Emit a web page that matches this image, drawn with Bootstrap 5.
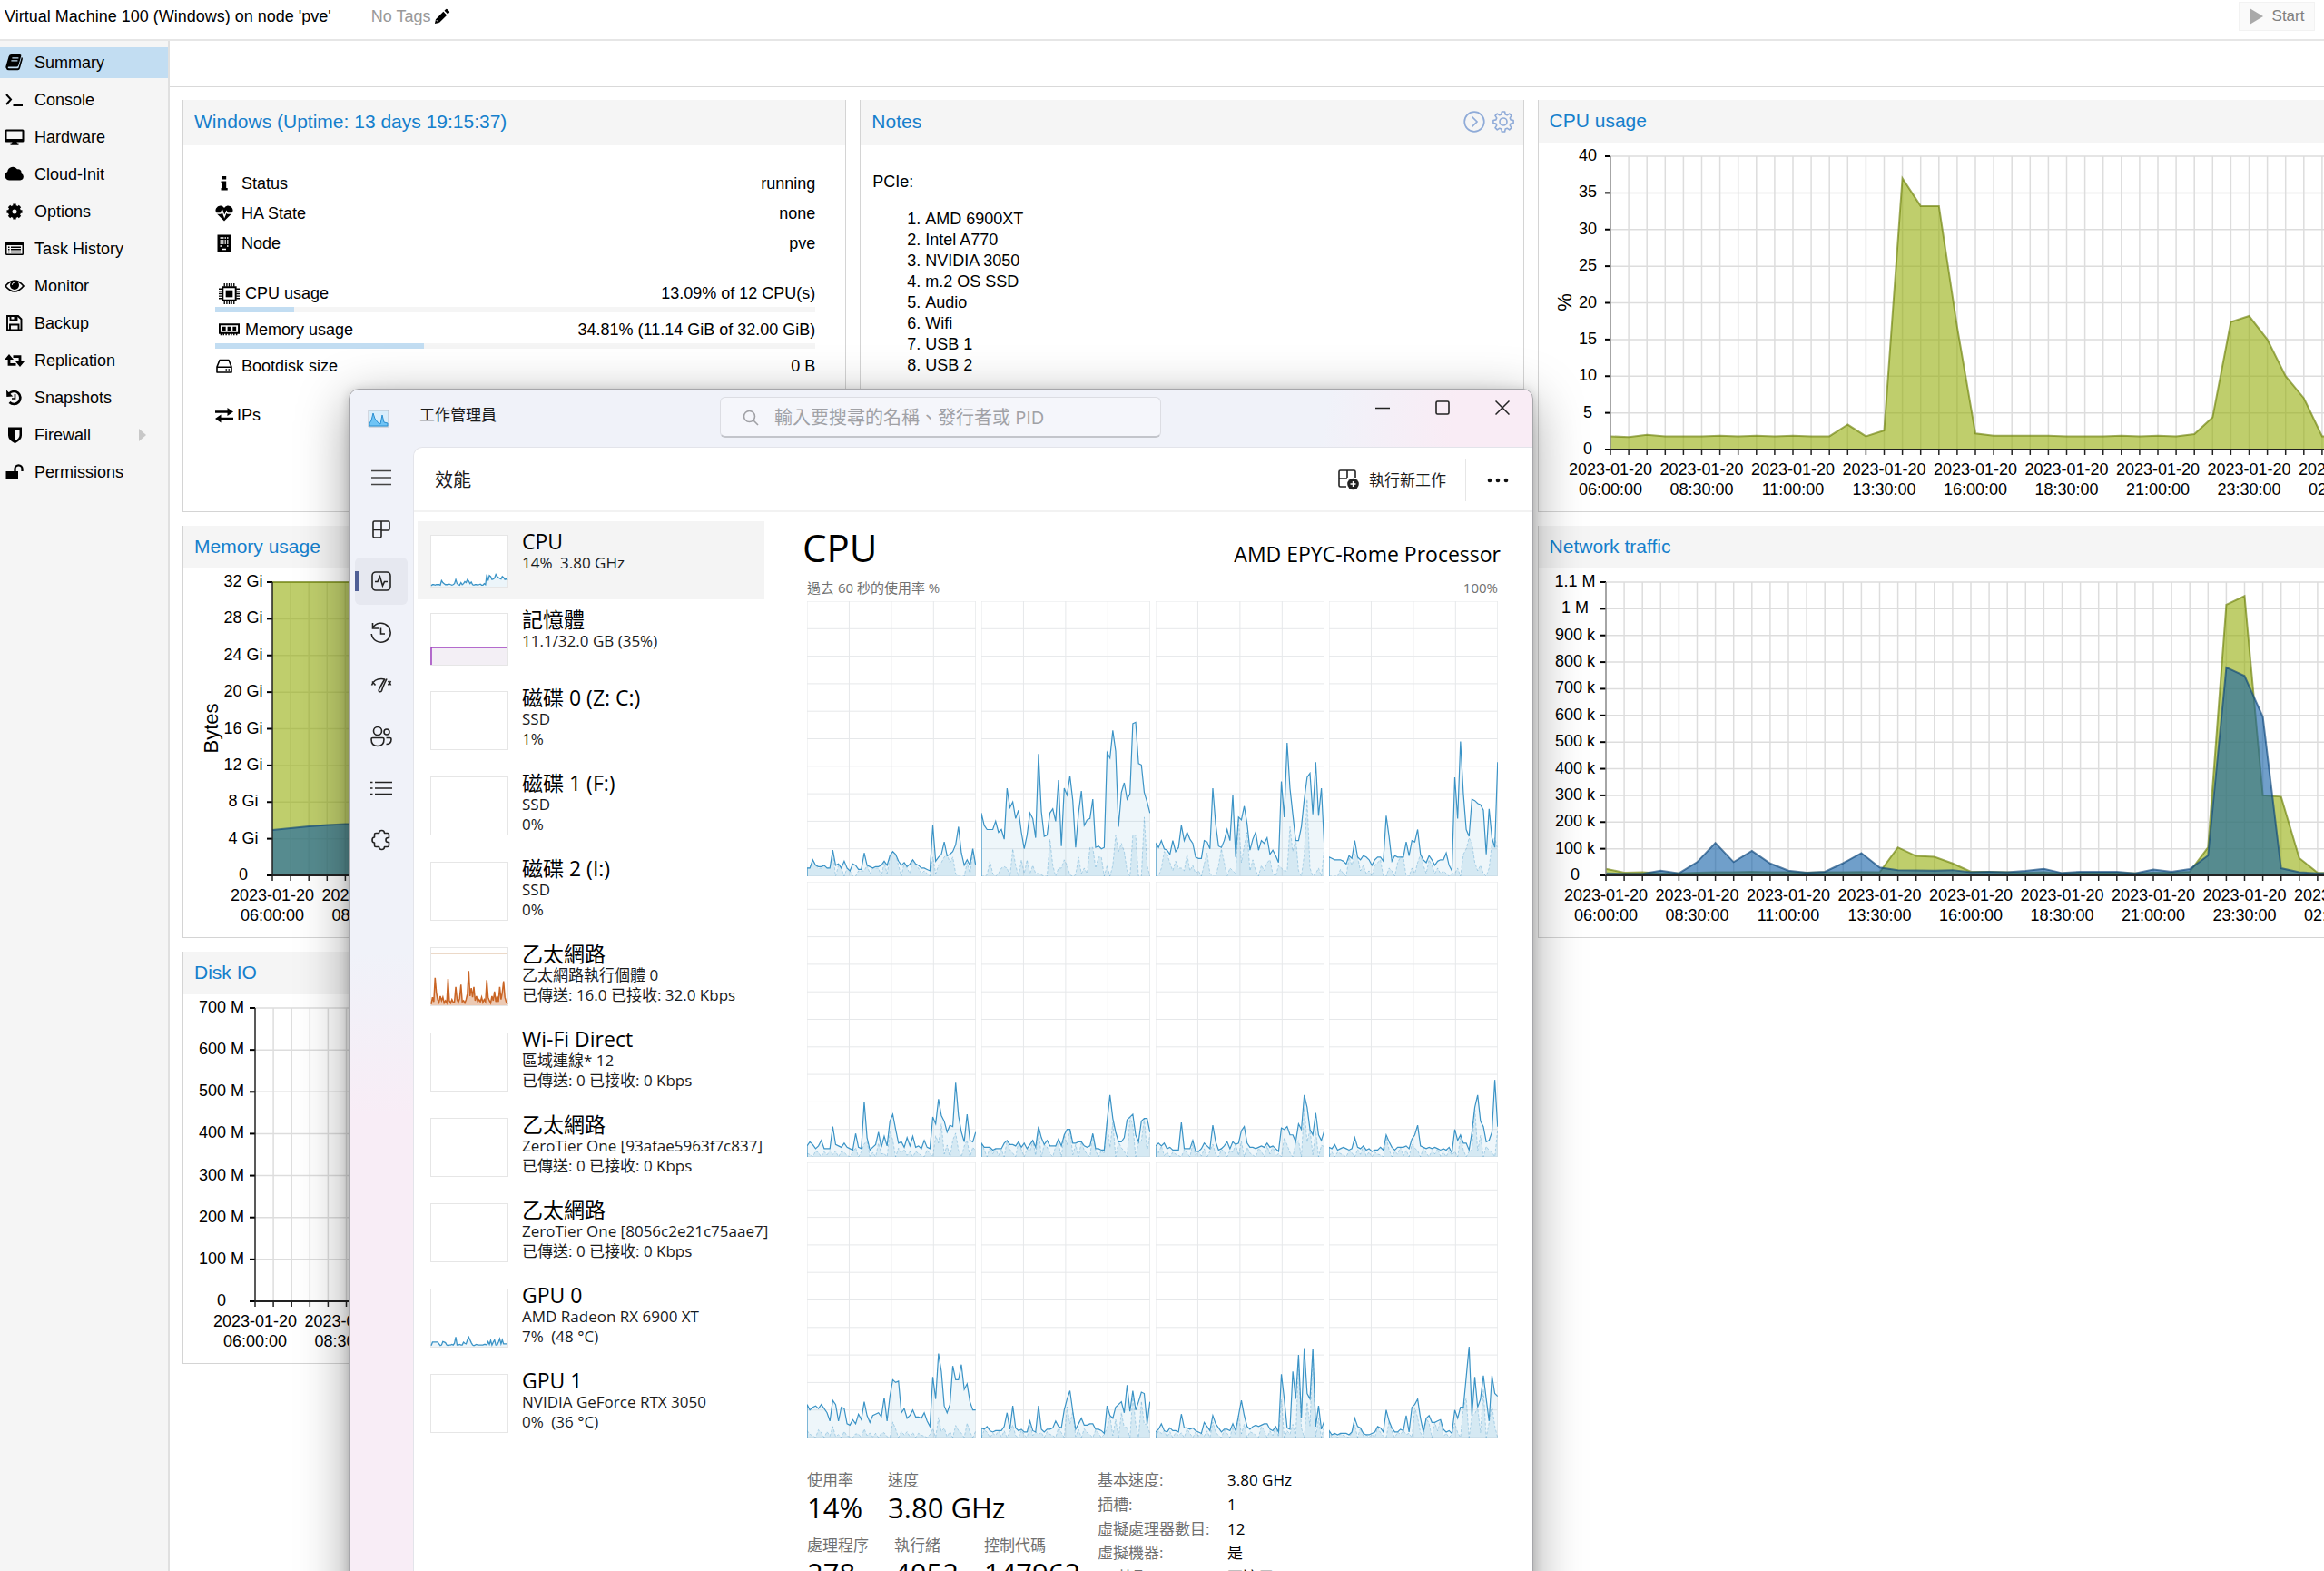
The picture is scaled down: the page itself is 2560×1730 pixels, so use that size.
<!DOCTYPE html>
<html lang="zh-Hant">
<head>
<meta charset="utf-8">
<meta name="viewport" content="width=device-width, initial-scale=1">
<title>Virtual Machine 100 (Windows)</title>
<link href="https://cdn.jsdelivr.net/npm/bootstrap@5.3.0/dist/css/bootstrap.min.css" rel="stylesheet">
<style>
  body { font-family: "Liberation Sans", Arial, sans-serif; font-size: 18px; line-height: 22px; color: #000; background: #fff; }
  svg { display: block; flex: none; }
  .pv-top { height: 45px; border-bottom: 2px solid #e6e6e6; padding: 0 10px 7px 5px; }
  .pv-tags { color: #999; margin-left: 44px; }
  .pv-start { width: 84px; height: 32px; background: #fafafa; border: 1px solid #f2f2f2; color: #808080; font-size: 17px; gap: 10px; }
  .pv-side { width: 187px; background: #f5f5f5; border-right: 2px solid #e0e0e0; padding-top: 7px; gap: 7px; }
  .pv-side a { height: 34px; padding-left: 5px; gap: 11px; color: #000; text-decoration: none; }
  .pv-side a.active { background: #c2ddf2; }
  .pv-side a .pv-caret { margin-left: auto; margin-right: 24px; }
  .pv-bar { height: 51px; border-bottom: 1px solid #d9d9d9; }
  .pv-grid { display: grid; grid-template-columns: repeat(4, 31%); grid-auto-rows: 454px; gap: 15px; padding: 14px 0 0 14px; }
  .pv-wide { grid-column: span 2; }
  .pv-panel { border: 1px solid #d4d4d4; border-top: 0; background: #fff; overflow: hidden; }
  .pv-head { height: 47px; background: #f5f5f5; color: #157fcc; font-size: 21px; line-height: 24px; padding: 0 10px 1px 12px; margin: 0; font-weight: 400; }
  .pv-head h2 { font-size: 21px; line-height: 24px; font-weight: 400; margin: 0; }
  .pv-head.pv-tall { height: 50px; padding-bottom: 3px; }
  .pv-status { padding: 25px 33px 0 35px; }
  .pv-line { height: 33px; gap: 9px; }
  .pv-line.pv-meter { gap: 6px; }
  .pv-line.pv-mid { height: 34px; padding-top: 3px; }
  .pv-line.pv-low { height: 30px; margin-top: 24px; }
  .pv-line span:last-child { margin-left: auto; }
  .pv-use { height: 6px; border-radius: 0; background: #f5f5f5; }
  .pv-use .progress-bar { background: #c2ddf2; }
  .pv-notes { padding: 29px 13px; line-height: 23px; }
  .pv-notes p { margin: 0 0 18px; }
  .pv-notes ol { padding-left: 58px; margin: 0; }
  .pv-iconbtn { border: 0; background: none; padding: 0; }
  .pv-plot { width: 100%; height: 406px; }
  .pv-plot text { font-size: 18px; text-anchor: middle; fill: #000; }
  .pv-plot .pv-axis { font-size: 22px; }

  .tm { left: 384px; top: 428px; bottom: -160px; width: 1305px; border: 1px solid #a6a6aa; border-radius: 11px; overflow: hidden;
    font-family: "Open Sans", "Noto Sans CJK TC", sans-serif; font-size: 17px; line-height: 22px; color: #1b1b1b;
    background: linear-gradient(100deg, transparent 82%, #f9ecf5 93%) top / 100% 70px no-repeat, linear-gradient(#f0f2f9 0, #f0f2f9 620px, #f8edf6 800px);
    box-shadow: 0 14px 56px rgba(0,0,0,.36), 0 2px 12px rgba(0,0,0,.18); }
  .tm-title { height: 63px; }
  .tm-name { width: 316px; padding: 0 0 8px 33px; }
  .tm-search { width: 486px; height: 45px; border: 1px solid #dcdde3; border-bottom: 2px solid #c3c5cb; border-radius: 6px; background: #f5f6fb; padding: 2px 0 0 24px; gap: 17px; margin-top: 8px; }
  .tm-search input { border: 0; background: none; outline: 0; font-size: 20px; line-height: 26px; padding: 0; width: 400px; }
  .tm-search input::placeholder { color: #a0a1a6; opacity: 1; }
  .tm-win { margin-left: auto; padding: 0 25px 24px 0; gap: 50px; }
  .tm button { border: 0; background: none; padding: 0; color: inherit; font-size: inherit; line-height: inherit; font-family: inherit; }
  .tm-rail { width: 70px; padding-top: 8px; gap: 5px; }
  .tm .tm-rail button { width: 58px; height: 52px; margin: 0 6px; border-radius: 6px; }
  .tm .tm-rail button.active { background: linear-gradient(#4f5f96, #4f5f96) 0 50% / 5px 22px no-repeat, #e6e8f0; }
  .tm-body { background: #fff; border: 1px solid #e3e4ea; border-right: 0; border-top-left-radius: 10px; }
  .tm-cmd { height: 71px; border-bottom: 2px solid #f2f2f2; padding: 2px 26px 0 23px; }
  .tm-cmd h1 { font-size: 20px; line-height: 26px; margin: 0; font-weight: 400; }
  .tm-run { gap: 11px; }
  .tm-split { width: 1px; height: 46px; background: #e6e6e6; margin: 0 23px 0 21px; }
  .tm-list { width: 391px; padding: 10px 4px 0 4px; }
  .tm .tm-list button { width: 382px; height: 94px; padding: 9px 0 0 14px; gap: 15px; text-align: left; line-height: 22px; white-space: nowrap; }
  .tm .tm-list button.tm-short { height: 86px; }
  .tm .tm-list button.active { background: #f4f4f4; }
  .tm-list b { display: block; font-weight: 400; font-size: 23px; line-height: 26px; color: #000; }
  .tm-thumb { width: 86px; height: 65px; border: 1px solid #e6e6e6; background: #fff; margin-top: 6px; overflow: visible; }
  .tm-short .tm-thumb { height: 58px; }
  .tm-main { padding: 14px 38px 0 42px; }
  .tm-main h2 { font-size: 42px; line-height: 50px; margin: 0 0 0 -5px; font-weight: 400; color: #000; }
  .tm-main .tm-model { font-size: 23px; line-height: 30px; margin-right: -3px; color: #000; }
  .tm-cap { font-size: 15px; line-height: 20px; color: #707070; margin-top: 9px; }
  .tm-cores { display: grid; grid-template-columns: repeat(4, 1fr); grid-auto-rows: 303px; gap: 6px; margin-top: 5px; }
  .tm-cores svg { width: 100%; height: 303px; }
  .tm-stats { padding-top: 36px; }
  .tm-stats span { color: #707070; display: block; }
  .tm-stats strong { font-weight: 400; font-size: 31px; line-height: 38px; display: block; color: #000; }
  .tm-left { width: 320px; gap: 12px; }
  .tm-facts { display: grid; grid-template-columns: 143px auto; line-height: 26px; margin: -2px 0 0; }
  .tm-facts dt { font-weight: 400; color: #707070; }
  .tm-facts dd { margin: 0; color: #000; }
</style>
</head>
<body class="vh-100 overflow-hidden position-relative d-flex flex-column">

<svg width="0" height="0" class="position-absolute" aria-hidden="true">
  <symbol id="i-book" viewBox="0 0 22 20"><path d="M7.500 1H17q1.800 0 1.300 1.700l-3 10.300q-.5 1.600-2.200 1.600H4.600q-1 0-.9.9.1.8 1.200.8h9.400q1 0 1.300-1l3.200-11.300q1.500.5 1.100 2.100l-2.900 10.200q-.6 2-2.400 2H4.800q-2.700 0-3.400-2.700-.2-1 .2-2L4.600 3.200Q5.300 1 7.500 1z"/><path d="M8.400 4.800h7M7.400 7.800h7" stroke="#c2ddf2" stroke-width="1.300"/></symbol>
  <symbol id="i-term" viewBox="0 0 22 20"><path d="M2 4l5 5.500L2 15M9.500 16H20" fill="none" stroke="currentColor" stroke-width="2"/></symbol>
  <symbol id="i-screen" viewBox="0 0 22 20"><path fill-rule="evenodd" d="M2 1.500h18q1.500 0 1.500 1.500v11q0 1.500-1.500 1.500h-6.500l.5 2h1.500v1.300h-9v-1.300H8l.5-2H2Q.5 15.500.5 14V3Q.5 1.500 2 1.500zm.5 2v8.500h17V3.500z"/></symbol>
  <symbol id="i-cloud" viewBox="0 0 22 20"><path d="M5.500 16.500a5 5 0 0 1-2.300-9.400A6 6 0 0 1 14 4.300a3.500 3.500 0 0 1 4.300 4.500 4 4 0 0 1-1 7.700z"/></symbol>
  <symbol id="i-cog" viewBox="0 0 22 20"><path fill="none" stroke="currentColor" stroke-width="4.600" d="M11 5.200a4.800 4.800 0 1 1 0 9.600 4.800 4.800 0 1 1 0-9.600z"/><path stroke="currentColor" stroke-width="3.400" d="M11 1.500v3M11 15.500v3M2.500 10h3M16.500 10h3M5 4l2 2M15 14l2 2M17 4l-2 2M7 14l-2 2"/></symbol>
  <symbol id="i-list" viewBox="0 0 22 20"><path fill-rule="evenodd" d="M2.500 2h17q1.500 0 1.500 1.500v12q0 1.500-1.500 1.500h-17Q1 17 1 15.500v-12Q1 2 2.500 2zm0 4v9.500h17V6z"/><path d="M4 8.200h1.500M4 10.800h1.500M4 13.400h1.500M7 8.200h11M7 10.800h11M7 13.400h11" stroke="currentColor" stroke-width="1.500"/></symbol>
  <symbol id="i-eye" viewBox="0 0 22 20"><path d="M1 10q10-12 20 0-10 12-20 0z" fill="none" stroke="currentColor" stroke-width="1.700"/><circle cx="11" cy="9" r="5"/><path d="M8.300 8.800q.2-2.600 2.800-2.800" fill="none" stroke="#f5f5f5" stroke-width="1"/></symbol>
  <symbol id="i-save" viewBox="0 0 22 20"><path d="M3 2h12l3.500 3.500V17.500H3zM6.500 2v4.500h7V2M6 17.500v-6h9.500v6" fill="none" stroke="currentColor" stroke-width="1.900"/><path d="M10.500 2h2.500v4h-2.500z"/></symbol>
  <symbol id="i-loop" viewBox="0 0 22 20"><path d="M5 7.500v6.800h7.500M9.500 5.600H17v6.800" fill="none" stroke="currentColor" stroke-width="2.800"/><path d="M0 9l5-6 5 6zM22 11l-5 6-5-6z"/></symbol>
  <symbol id="i-undo" viewBox="0 0 22 20"><path d="M5 5.500A7 7 0 1 1 5.500 15" fill="none" stroke="currentColor" stroke-width="2.700"/><path d="M2 1.500l.3 7.500 7-.6z"/><path d="M11.500 6v5H8" fill="none" stroke="currentColor" stroke-width="1.700"/></symbol>
  <symbol id="i-shield" viewBox="0 0 22 20"><path fill-rule="evenodd" d="M4 1.500h15v9q0 5-7.500 8.700Q4 15.500 4 10.500zM11.500 4v12.500q5-2.800 5-6.500V4z"/></symbol>
  <symbol id="i-lock" viewBox="0 0 22 20"><path d="M1.500 9H15v8.500H1.500z"/><path d="M11.500 10V6.300a4 4 0 0 1 8 0V9" fill="none" stroke="currentColor" stroke-width="2.300"/></symbol>
  <symbol id="i-pen" viewBox="0 0 20 20"><path d="M1 19l1.200-5.500L11.500 4.200l4.300 4.300L6.500 17.800zM12.800 3l1.600-1.600q1-1 2 0l2.200 2.200q1 1 0 2L17 7.300z"/><path d="M3 14.500l2.500 2.500" stroke="#fff" stroke-width="1"/></symbol>
  <symbol id="i-info" viewBox="0 0 20 20"><path d="M7.800 2h4.400v3.600H7.800zM6.500 7.500h5.700v7.500h1.500v2.500H6.500V15H8v-5H6.500z"/></symbol>
  <symbol id="i-heart" viewBox="0 0 20 20"><path d="M10 18.500L2 10.500Q-.5 7.500 1 4.500 3 1 6.500 1.500 9 2 10 4q1-2 3.500-2.500Q17 1 19 4.500q1.500 3-1 6z"/><path d="M1 10h5l1.700-3.500 2.500 7L12.500 8l1.300 2H19" fill="none" stroke="#fff" stroke-width="1.400"/></symbol>
  <symbol id="i-node" viewBox="0 0 20 20"><path d="M2.500.5h15v19h-15z"/><path d="M5.500 4h1.500M8 4h1.500M10.500 4H12M13 4h1.500M5.500 7h1.500M8 7h1.500M10.500 7H12M13 7h1.500M5.500 10h1.500M8 10h1.500M10.500 10H12M13 10h1.500M5.500 13h1.500M13 13h1.500M8 16.500h4" stroke="#fff" stroke-width="1.400"/></symbol>
  <symbol id="i-chip" viewBox="0 0 24 24"><path d="M4.500 4.500h15v15h-15z" fill="none" stroke="currentColor" stroke-width="2"/><path d="M8 8h8v8H8z"/><path d="M6.500 0v4M9.300 0v4M12 0v4M14.700 0v4M17.500 0v4M6.500 20v4M9.300 20v4M12 20v4M14.700 20v4M17.500 20v4M0 6.500h4M0 9.300h4M0 12h4M0 14.700h4M0 17.500h4M20 6.500h4M20 9.300h4M20 12h4M20 14.700h4M20 17.500h4" stroke="currentColor" stroke-width="1.400"/></symbol>
  <symbol id="i-ram" viewBox="0 0 24 24"><path d="M1 6.500h22v10H1z" fill="none" stroke="currentColor" stroke-width="2"/><path d="M4 9h4v4.500H4zM10 9h4v4.500h-4zM16 9h4v4.500h-4z"/><path d="M2.500 16v3M5.500 16v3M8.500 16v3M11.500 16v3M14.500 16v3M17.500 16v3M20.500 16v3" stroke="currentColor" stroke-width="1.500"/></symbol>
  <symbol id="i-disk" viewBox="0 0 20 20"><path d="M2 11l3-7.500h10L18 11v6H2zM2 11.200h16" fill="none" stroke="currentColor" stroke-width="1.600" stroke-linejoin="round"/><path d="M11.500 14h1.600M14.500 14h1.600" stroke="currentColor" stroke-width="1.600"/></symbol>
  <symbol id="i-swap" viewBox="0 0 20 20"><path d="M0 6.500h15M5 14h15" stroke="currentColor" stroke-width="2.600"/><path d="M13.500 2L20 6.500 13.500 11zM6.500 9.500L0 14l6.500 4.500z"/></symbol>
  <symbol id="i-gear" viewBox="0 0 24 24"><g fill="none" stroke="currentColor"><circle cx="12" cy="12" r="4" stroke-width="1.600"/><path stroke-width="1.600" stroke-linejoin="round" d="M10.400 1h3.200l.6 3 2 .8 2.500-1.700 2.300 2.300-1.700 2.500.8 2 3 .6v3l-3 .6-.8 2 1.700 2.500-2.300 2.300-2.500-1.700-2 .8-.6 3h-3.200l-.6-3-2-.8-2.500 1.700L3 18.600l1.700-2.500-.8-2-3-.6v-3l3-.6.8-2L3 5.400l2.300-2.300 2.500 1.700 2-.8z"/></g></symbol>
  <symbol id="i-next" viewBox="0 0 24 24"><g fill="none" stroke="currentColor" stroke-width="1.700"><circle cx="12" cy="12" r="10.800"/><path d="M9.500 6.500l5.500 5.500-5.500 5.500"/></g></symbol>
</svg>

<header class="pv-top d-flex align-items-center">
  <span>Virtual Machine 100 (Windows) on node 'pve'</span>
  <span class="pv-tags">No Tags</span>
  <button class="pv-iconbtn ms-1" aria-label="Edit tags"><svg width="18" height="18"><use href="#i-pen"/></svg></button>
  <button class="pv-start ms-auto d-flex align-items-center justify-content-center p-0"><svg width="15" height="18" viewBox="0 0 15 18" fill="#a9a9a9"><path d="M0 0l15 9-15 9z"/></svg>Start</button>
</header>

<div class="d-flex flex-grow-1">
  <nav class="pv-side d-flex flex-column flex-shrink-0">
    <a href="#" class="d-flex align-items-center active"><svg width="22" height="20"><use href="#i-book"/></svg>Summary</a>
    <a href="#" class="d-flex align-items-center"><svg width="22" height="20"><use href="#i-term"/></svg>Console</a>
    <a href="#" class="d-flex align-items-center"><svg width="22" height="20"><use href="#i-screen"/></svg>Hardware</a>
    <a href="#" class="d-flex align-items-center"><svg width="22" height="20"><use href="#i-cloud"/></svg>Cloud-Init</a>
    <a href="#" class="d-flex align-items-center"><svg width="22" height="20"><use href="#i-cog"/></svg>Options</a>
    <a href="#" class="d-flex align-items-center"><svg width="22" height="20"><use href="#i-list"/></svg>Task History</a>
    <a href="#" class="d-flex align-items-center"><svg width="22" height="20"><use href="#i-eye"/></svg>Monitor</a>
    <a href="#" class="d-flex align-items-center"><svg width="22" height="20"><use href="#i-save"/></svg>Backup</a>
    <a href="#" class="d-flex align-items-center"><svg width="22" height="20"><use href="#i-loop"/></svg>Replication</a>
    <a href="#" class="d-flex align-items-center"><svg width="22" height="20"><use href="#i-undo"/></svg>Snapshots</a>
    <a href="#" class="d-flex align-items-center"><svg width="22" height="20"><use href="#i-shield"/></svg>Firewall<svg class="pv-caret" width="8" height="14" viewBox="0 0 8 14" fill="#c8c8c8"><path d="M0 0l8 7-8 7z"/></svg></a>
    <a href="#" class="d-flex align-items-center"><svg width="22" height="20"><use href="#i-lock"/></svg>Permissions</a>
  </nav>

  <main class="flex-grow-1 overflow-hidden">
    <div class="pv-bar"></div>
    <div class="pv-grid">
      <section class="pv-panel">
        <div class="pv-head pv-tall d-flex align-items-center"><h2>Windows (Uptime: 13 days 19:15:37)</h2></div>
        <div class="pv-status">
          <div class="pv-line d-flex align-items-center"><svg width="20" height="20"><use href="#i-info"/></svg><span>Status</span><span>running</span></div>
          <div class="pv-line d-flex align-items-center"><svg width="20" height="20"><use href="#i-heart"/></svg><span>HA State</span><span>none</span></div>
          <div class="pv-line d-flex align-items-center"><svg width="20" height="20"><use href="#i-node"/></svg><span>Node</span><span>pve</span></div>
          <div class="pv-line pv-low pv-meter d-flex align-items-center"><svg class="ms-1" width="23" height="23"><use href="#i-chip"/></svg><span>CPU usage</span><span>13.09% of 12 CPU(s)</span></div>
          <div class="progress pv-use"><div class="progress-bar" style="width:13.09%"></div></div>
          <div class="pv-line pv-mid pv-meter d-flex align-items-center"><svg class="ms-1" width="23" height="23"><use href="#i-ram"/></svg><span>Memory usage</span><span>34.81% (11.14 GiB of 32.00 GiB)</span></div>
          <div class="progress pv-use"><div class="progress-bar" style="width:34.81%"></div></div>
          <div class="pv-line pv-mid d-flex align-items-center"><svg width="20" height="20"><use href="#i-disk"/></svg><span>Bootdisk size</span><span>0 B</span></div>
          <div class="pv-line pv-low d-flex align-items-center gap-1"><svg width="20" height="20"><use href="#i-swap"/></svg><span class="ms-0">IPs</span></div>
        </div>
      </section>

      <section class="pv-panel">
        <div class="pv-head pv-tall d-flex align-items-center"><h2 class="me-auto">Notes</h2>
          <button class="pv-iconbtn" aria-label="Collapse"><svg width="24" height="24" color="#8fabd8"><use href="#i-next"/></svg></button>
          <button class="pv-iconbtn ms-2" aria-label="Edit notes"><svg width="24" height="24" color="#8fabd8"><use href="#i-gear"/></svg></button>
        </div>
        <div class="pv-notes">
          <p>PCIe:</p>
          <ol><li>AMD 6900XT</li><li>Intel A770</li><li>NVIDIA 3050</li><li>m.2 OS SSD</li><li>Audio</li><li>Wifi</li><li>USB 1</li><li>USB 2</li></ol>
        </div>
      </section>

      <section class="pv-panel pv-wide"><div class="pv-head d-flex align-items-center"><h2>CPU usage</h2></div><svg class="pv-plot" id="plot-cpu"></svg></section>
      <section class="pv-panel pv-wide"><div class="pv-head d-flex align-items-center"><h2>Memory usage</h2></div><svg class="pv-plot" id="plot-mem"></svg></section>
      <section class="pv-panel pv-wide"><div class="pv-head d-flex align-items-center"><h2>Network traffic</h2></div><svg class="pv-plot" id="plot-net"></svg></section>
      <section class="pv-panel pv-wide"><div class="pv-head d-flex align-items-center"><h2>Disk IO</h2></div><svg class="pv-plot" id="plot-disk"></svg></section>
    </div>
  </main>
</div>

<div class="tm position-absolute d-flex flex-column">
  <div class="tm-title d-flex flex-shrink-0">
    <div class="d-flex align-items-center ps-3">
      <svg class="ms-1" width="24" height="20" viewBox="0 0 24 20"><path d="M1 1h22v18H1z" fill="#d9eefb" stroke="#b4bcc6"/><path d="M2 15l2-3 2-8 2 6 3 4 3 2 2-10 2 8 4 1v3H2z" fill="#6fc4f5" stroke="#2a8fd0"/></svg>
    </div>
    <div class="tm-name d-flex align-items-center">工作管理員</div>
    <label class="tm-search d-flex align-items-center ms-5">
      <svg width="18" height="18" viewBox="0 0 18 18" fill="none" stroke="#a0a1a6" stroke-width="1.600"><circle cx="7.500" cy="7.500" r="6"/><path d="M12 12l5 5"/></svg>
      <input type="search" aria-label="搜尋" placeholder="輸入要搜尋的名稱、發行者或 PID">
    </label>
    <div class="tm-win d-flex align-items-center">
      <button aria-label="最小化"><svg width="16" height="16" viewBox="0 0 16 16" stroke="#222" stroke-width="1.500"><path d="M0 8.500h16"/></svg></button>
      <button aria-label="最大化"><svg width="16" height="16" viewBox="0 0 16 16" stroke="#222" stroke-width="1.600" fill="none"><rect x="1" y="1" width="14" height="14" rx="1.500"/></svg></button>
      <button aria-label="關閉"><svg width="16" height="16" viewBox="0 0 16 16" stroke="#222" stroke-width="1.500"><path d="M.5.5l15 15M15.500.5l-15 15"/></svg></button>
    </div>
  </div>

  <div class="d-flex flex-grow-1">
    <div class="tm-rail d-flex flex-column flex-shrink-0">
      <button class="d-flex align-items-center justify-content-center" aria-label="選單"><svg width="22" height="22" viewBox="0 0 22 22" stroke="#444" stroke-width="1.600"><path d="M0 3.500h22M0 11h22M0 18.500h22"/></svg></button>
      <button class="d-flex align-items-center justify-content-center" aria-label="處理程序"><svg width="20" height="20" viewBox="0 0 20 20" fill="none" stroke="#222" stroke-width="1.600"><path d="M2.500 1h15Q19 1 19 2.500v7q0 1.500-1.500 1.500H10v6.500q0 1.500-1.500 1.500h-6Q1 19 1 17.500v-15Q1 1 2.500 1zM10 1v10M1 10.500h9"/></svg></button>
      <button class="active d-flex align-items-center justify-content-center" aria-label="效能"><svg width="22" height="22" viewBox="0 0 22 22" fill="none" stroke="#222" stroke-width="1.600"><rect x="1" y="1" width="20" height="20" rx="4"/><path d="M4 11.500h3l2.500-5.500 3 10 2-4.500H18"/></svg></button>
      <button class="d-flex align-items-center justify-content-center" aria-label="應用程式歷程"><svg width="24" height="24" viewBox="0 0 24 24" fill="none" stroke="#222" stroke-width="1.600"><path d="M2.500 6.500A10.500 10.500 0 1 1 1.200 13M2.500 1v6H9M11.500 6.500v6.500H16"/></svg></button>
      <button class="d-flex align-items-center justify-content-center" aria-label="開機應用程式"><svg width="24" height="24" viewBox="0 0 24 24" fill="none" stroke="#222" stroke-width="1.600"><path d="M1.500 12.500Q4 5.500 12 5.500q2 0 4 .7M2 8.500l3.500 4M22.500 12.500q-.8-2.500-3-4.500M22.500 8l-3 4.500M18 5.500q-4 8-5.500 13-.5 1.500-2 1.200-1.700-.4-1.200-2Q11.500 13 16 5.500"/></svg></button>
      <button class="d-flex align-items-center justify-content-center" aria-label="使用者"><svg width="24" height="24" viewBox="0 0 24 24" fill="none" stroke="#222" stroke-width="1.600"><circle cx="8" cy="6" r="4.500"/><circle cx="18" cy="7" r="3"/><path d="M2.500 13.500h11q1.500 0 1.500 1.500 0 7.500-7 7.500T1 15q0-1.500 1.500-1.500zM17.500 13.500h4q1.500 0 1.500 1.500 0 5.500-5.500 5.500"/></svg></button>
      <button class="d-flex align-items-center justify-content-center" aria-label="詳細資料"><svg width="24" height="20" viewBox="0 0 24 20" stroke="#222" stroke-width="1.600"><path d="M5 3.500h19M5 10h19M5 16.500h19M0 3.500h2.500M0 10h2.500M0 16.500h2.500"/></svg></button>
      <button class="d-flex align-items-center justify-content-center" aria-label="服務"><svg width="24" height="24" viewBox="0 0 24 24" fill="none" stroke="#222" stroke-width="1.600" stroke-linejoin="round"><path d="M9.500 4.500Q9.500 1.500 12.500 1.500T15.500 4.500H19q1.500 0 1.500 1.500v3.500h-1Q17 9.500 17 12t2.500 2.500h1V18q0 1.500-1.500 1.500h-3.500q0 3-3 3t-3-3H6q-1.500 0-1.500-1.500V15Q2 15 2 12t2.500-3V6Q4.500 4.500 6 4.500z"/></svg></button>
    </div>

    <div class="tm-body flex-grow-1 d-flex flex-column">
      <div class="tm-cmd d-flex align-items-center flex-shrink-0">
        <h1 class="me-auto">效能</h1>
        <button class="tm-run d-flex align-items-center"><svg width="23" height="23" viewBox="0 0 23 23"><g fill="none" stroke="#222" stroke-width="1.600"><path d="M9 19H2.500Q1 19 1 17.500v-15Q1 1 2.500 1h15Q19 1 19 2.500V9M10 1v8M1 10h9"/></g><circle cx="16.500" cy="16" r="6.300" fill="#222"/><path d="M16.500 13v6M13.500 16h6" stroke="#fff" stroke-width="1.400"/></svg>執行新工作</button>
        <div class="tm-split"></div>
        <button aria-label="更多"><svg width="24" height="6" viewBox="0 0 24 6" fill="#111"><circle cx="3" cy="3" r="2.300"/><circle cx="12" cy="3" r="2.300"/><circle cx="21" cy="3" r="2.300"/></svg></button>
      </div>

      <div class="d-flex">
        <div class="tm-list flex-shrink-0" id="tm-list"></div>
        <div class="tm-main flex-grow-1">
          <div class="d-flex justify-content-between align-items-baseline"><h2>CPU</h2><div class="tm-model">AMD EPYC-Rome Processor</div></div>
          <div class="tm-cap d-flex justify-content-between"><span>過去 60 秒的使用率 %</span><span>100%</span></div>
          <div class="tm-cores" id="tm-cores"></div>
          <div class="tm-stats d-flex">
            <div class="tm-left d-flex flex-column">
              <div class="d-flex gap-4"><div class="me-1"><span>使用率</span><strong>14%</strong></div><div><span>速度</span><strong>3.80 GHz</strong></div></div>
              <div class="d-flex gap-4"><div class="me-1"><span>處理程序</span><strong>278</strong></div><div class="me-1"><span>執行緒</span><strong>4052</strong></div><div><span>控制代碼</span><strong>147962</strong></div></div>
            </div>
            <dl class="tm-facts"><dt>基本速度:</dt><dd>3.80 GHz</dd><dt>插槽:</dt><dd>1</dd><dt>虛擬處理器數目:</dt><dd>12</dd><dt>虛擬機器:</dt><dd>是</dd><dt>L1 快取:</dt><dd>不適用</dd></dl>
          </div>
        </div>
      </div>
    </div>
  </div>
</div>

<script src="https://cdn.jsdelivr.net/npm/bootstrap@5.3.0/dist/js/bootstrap.bundle.min.js"></script>
<script>
const GREEN = ['#94ae0a', '#6c7f08'], BLUE = ['#115fa6', '#0c4579'];
const TOP = 15, BOTTOM = 338, STEP = 20.1;

/* Area chart with a half-hour grid; every fifth tick carries its date and time. */
function drawPlot(id, o) {
  const slots = o.slots || 70;
  const y = v => BOTTOM - (BOTTOM - TOP) * v / o.max, x = i => o.left + i * STEP, end = x(slots);
  let s = '', n = o.labels.length - 1;
  for (let i = 1; i <= slots; i++) s += `<path d="M${x(i)} ${TOP}V${BOTTOM}" stroke="#ddd" stroke-width="1.500"/>`;
  o.labels.forEach((t, k) => {
    const py = TOP + (BOTTOM - TOP) * (n - k) / n;
    s += `<path d="M${o.left} ${py}H${end}" stroke="#ddd" stroke-width="1.500"/><path d="M${o.left - 6} ${py}h6" stroke="#000" stroke-width="2"/><text x="${o.labelX}" y="${py + 5}">${t}</text>`;
  });
  o.series.forEach(([c, d]) => {
    const pts = d.map((v, i) => `${x(i)},${y(v)}`).join(' ');
    s += `<polygon points="${x(0)},${BOTTOM} ${pts} ${x(d.length - 1)},${BOTTOM}" fill="${c[0]}" fill-opacity=".6"/><polyline points="${pts}" fill="none" stroke="${c[1]}" stroke-opacity=".65" stroke-width="2"/>`;
  });
  s += `<path d="M${o.left} ${TOP}V${BOTTOM}" stroke="${o.axis}" stroke-width="1.500"/><path d="M${o.left} ${BOTTOM}H${end}" stroke="#222" stroke-width="2"/>`;
  for (let i = 0; i <= slots; i++) s += `<path d="M${x(i)} ${BOTTOM}v6" stroke="#222" stroke-width="1.500"/>`;
  for (let i = 0; i <= slots; i += 5) {
    const t = new Date(Date.UTC(2023, 0, 20, 6) + i * 18e5).toISOString();
    s += `<text x="${x(i)}" y="366">${t.slice(0, 10)}</text><text x="${x(i)}" y="388">${t.slice(11, 19)}</text>`;
  }
  if (o.title) s += `<text class="pv-axis" transform="translate(${o.titleX} 176) rotate(-90)">${o.title}</text>`;
  document.getElementById(id).innerHTML = s;
}
drawPlot('plot-cpu', { left: 79, labelX: 54, slots: 43, max: 40, axis: '#888', title: '%', titleX: 36, labels: [0, 5, 10, 15, 20, 25, 30, 35, 40],
  series: [[GREEN, [1.8,1.7,2,1.8,1.8,1.8,1.9,1.8,1.9,1.8,1.9,1.8,1.8,3.4,1.8,2.6,37,33.2,33.2,16.7,2.2,1.9,1.9,1.9,1.9,1.8,1.8,1.8,1.9,1.8,1.9,1.8,2.1,4.4,17.4,18.2,15,10,7,1.8,1.8]]] });
drawPlot('plot-mem', { left: 98, labelX: 66, slots: 9, max: 32, axis: '#222', title: 'Bytes', titleX: 38, labels: ['0', '4 Gi', '8 Gi', '12 Gi', '16 Gi', '20 Gi', '24 Gi', '28 Gi', '32 Gi'],
  series: [[GREEN, Array(10).fill(32)], [BLUE, [4.95,5.15,5.35,5.5,5.6,5.6,5.6,5.6,5.6,5.6]]] });
drawPlot('plot-net', { left: 74, labelX: 40, slots: 43, max: 1100, axis: '#888', labels: ['0', '100 k', '200 k', '300 k', '400 k', '500 k', '600 k', '700 k', '800 k', '900 k', '1 M', '1.1 M'],
  series: [[GREEN, [25,10,12,8,8,10,12,12,14,12,12,10,12,12,13,12,105,73,70,45,14,14,12,10,12,8,10,10,10,8,10,10,14,105,1015,1048,300,295,65,10,8]],
           [BLUE, [8,6,6,18,8,50,122,50,92,45,18,10,14,46,84,30,20,19,18,20,12,14,12,17,25,9,14,14,14,8,22,14,24,75,780,748,595,27,12,8,8]]] });
drawPlot('plot-disk', { left: 79, labelX: 42, slots: 9, max: 700, axis: '#222', labels: ['0', '100 M', '200 M', '300 M', '400 M', '500 M', '600 M', '700 M'], series: [] });

/* One chart per logical processor: total load, with kernel time below it. */
const LOAD = [
 [3,3,6,4,3.5,3.5,4,3,3,9.5,4,4.5,3,5.5,3,2,4.5,4,2.5,2.5,8.5,4,3.5,3,3.5,3.5,4,5.5,4,7.5,9,8,5.5,4,5,3.5,4.5,6,4.5,4,3,3,2.5,2,18.5,5.5,7,8,12.5,7.5,8,9,11.5,18,8.5,4,6,4,10,4],
 [23,18.5,17,17,17,20,16,17,13.5,32,25,27,21,24,16,10,15,23,21,14,44.5,23.5,14.5,15,23,24.5,20,35,11,32,29.5,36.5,27.5,10.5,23,31,18.5,20.5,21,28,10.5,11,10,10.5,45,43,53,45.5,18,30.5,34,28,30,55.5,56,41,40.5,30.5,27,23],
 [12,10.5,13,10,9.5,8,13,9,10.5,18.5,13,16,13.5,12,7,6.5,6.5,13,12.5,10,32,19,11,10.5,13,17,13,29.5,7,21.5,20.5,25.5,19,9.5,13.5,16,9.5,13,12,14,8,9.5,7.5,5,34.5,21.5,48.5,32,22.5,13,13,18,28,36,37.5,22.5,41.5,22,32,11],
 [7,6.5,6,6,6,5.5,4.5,7.5,6.5,13,7,6,7.5,7,6,4,6,7,7,5.5,22,14.5,5.5,7.5,7,7,7,12.5,7.5,13,12.5,17,8,6,5,7.5,6,4,5.5,6,6,8.5,4,2,36,21,49,30,17,14.5,28,27.5,26.5,26,24,8,24.5,14,10.5,41.5],
 [4,5.5,4.5,3,4,6,3,3,3,11,4.5,4,3.5,5,3.5,3,2.5,8.5,3.5,3,20,7,2.5,3.5,4.5,9,3.5,7.5,4,13,15.5,10,5,5.5,3.5,7,4,7.5,3.5,4,3,6,3.5,3,14.5,12,21,15,13,9,11.5,11,27,15,9,5.5,15.5,6,5.5,9],
 [5,3.5,3.5,3.5,2.5,3,3,3,5,6,4.5,4.5,4,5.5,3.5,5,3,4.5,6,3.5,11,7,4.5,6,4,4,4,6.5,4,8,10,10,5,5,5.5,5.5,4,3.5,4,8.5,3,3,2.5,2.5,13,22.5,14,9,5.5,5.5,7,13.5,14.5,15.5,8,5.5,13,14,14,9],
 [4,5,4,5,3,3.5,2.5,2.5,2.5,12.5,3,3,3,6,2,2,3,5,4,3,11.5,5.5,2.5,3,4,5.5,3,5.5,4.5,5,9.5,11,5,3.5,3.5,3,3.5,4,3.5,5,3.5,4,3,2,10.5,10,11,8,8,5.5,12,10,22.5,18,10,8,16,8,6,9.5],
 [3.5,3,4.5,2.5,3,3.5,3,2.5,3,7,3.5,3,4,2.5,3,2,2.5,2.5,3.5,2.5,8,5.5,3.5,2.5,3.5,3.5,3.5,4,3,6.5,8,11.5,4,3.5,3,3.5,3,3.5,3,2.5,3,2.5,3.5,1.5,10,6,8,5,5,2.5,9,18,22.5,13,11,5.5,6,9,28,11],
 [12,10,11,11.5,10.5,12,10.5,9,6,13.5,12,6,11,10.5,5,4.5,6.5,5,8.5,6.5,13,8,5.5,8,8.5,9,7.5,14.5,6,15,21,20,20.5,9,10.5,7,8,10,7.5,7.5,7,9,6,4,22,14,30.5,24,11.5,9,12,26,21,21,26.5,17.5,19.5,13,10,10],
 [3.5,3,4,2.5,2,2.5,2.5,2.5,4,9,3,11.5,3.5,2.5,3,2,2,6,2.5,2,11.5,3,2,3,3,3.5,6,4,3.5,10,14,17,9.5,3,5,7,4.5,4.5,5,5,3,3,2.5,1.5,11.5,8,7,11,12,13,9,19,9.5,17,10,13,16.5,16,5,13],
 [2,3,5,2.5,2,3.5,2.5,2.5,2,8.5,3.5,3.5,3,3.5,2.5,2,1.5,5.5,4,2.5,8,5,3.5,2,3,3,2.5,5,2.5,8,13.5,8,4,3,4,4.5,4,4.5,5,5,3,2.5,4,2,23,14,3.5,3,24,14,30,7,32.5,16,14,32,4,11.5,3,6],
 [2.5,1,1.5,1,1.5,1.5,1.5,1,2,7,4,3.5,1.5,1,1,1.5,2,4,3.5,2,10,6,3.5,2,2,3,2.5,8,2,11,12,14,7,2,7,8,5.5,5.5,6,6.5,3,2,2.5,1.5,10,7,11,11,22,33,8,22,11,14,22.5,14,6,22.5,16,15]];
const KERNEL = [
 [3,3,6,4,3,3,4,3,3,9,0,4,3,0,3,2,0,0,2,2,2,4,1,3,3,3,0,5,1,7,9,8,4,0,5,3,1,6,4,3,1,2,1,0,7,1,4,5,7,8,5,7,1,0,0,0,5,1,9,4],
 [0,0,.5,5.5,1,0,1,3,3.5,3,0,10,4,0,6,1,6,1,4,1,1,.5,0,0,13.5,4,0,3,3,6,4,.5,0,.5,7,1,3,1,10.5,10.5,3,7,7,0,4,0,4,15,9,12,9,2,0,15,15,0,0,21.5,4,0],
 [0,0,3,9,8,5,2,5.5,3,3,2,8,2,4,1,2,0,4.5,8.5,1,0,0,4,10,5,0,3,2,1,21,5,11,16,2,6,2,0,4,2,5,6,1,0,4,3,2,2,18,9,14,2,0,8,28,3,0,1,3,0,10],
 [0,0,0,0,2.5,1,0,7,4,8,7,2,4,1,2,0,4,5,6,0,0,3,2,0,5,7,7,0,0,3,1,5,8,4,1,6,4,1,3,1,2,1,0,1,1,3,0,8,10,14,12,5,2,4,1,0,3,12,14,10]];
const SHARE = [.2, 0, .9, .5, 0, .8, .3, 1, .1, .6, 0, .7, .4];
const LEAN = [.8, 1.5, 1, 1, .3, 1, 1, 1.3];
const pts = a => a.map((v, i) => `${i},${100 - v}`).join(' ');
const line = 'vector-effect="non-scaling-stroke" fill="none"';
document.getElementById('tm-cores').innerHTML = LOAD.map((load, n) => {
  const kern = KERNEL[n] || load.map((v, i) => Math.min(v, v * SHARE[(i + n * 3) % SHARE.length] * LEAN[n - 4]));
  let grid = '';
  for (let i = 0; i <= 4; i++) grid += `M${i * 14.75} 0V100`;
  for (let i = 0; i <= 10; i++) grid += `M0 ${i * 10}H59`;
  return `<svg viewBox="0 0 59 100" preserveAspectRatio="none"><path d="${grid}" ${line} stroke="#e6e8ea"/>
    <polygon points="0,100 ${pts(load)} 59,100" fill="#117dbb" fill-opacity=".07"/>
    <polygon points="0,100 ${pts(kern)} 59,100" fill="#117dbb" fill-opacity=".11"/>
    <polyline points="${pts(kern)}" ${line} stroke="#117dbb" stroke-opacity=".28" stroke-dasharray="3 2"/>
    <polyline points="0,100 ${pts(load)}" ${line} stroke="#3a93c6" stroke-width="1.200"/></svg>`;
}).join('');

const blue = a => `<polygon points="0,100 ${pts(a)} 59,100" fill="#117dbb" fill-opacity=".08"/><polyline points="${pts(a)}" ${line} stroke="#3a93c6" stroke-width="1.300"/>`;
const spikes = [2,14,6,48,22,10,5,16,8,14,4,8,4,46,8,4,10,5,6,32,10,5,12,36,6,8,4,10,20,60,16,30,14,32,8,16,6,10,6,14,5,10,6,44,14,8,4,16,8,24,6,16,6,32,10,22,42,14,6,2];
const low = [2,4,4,3,4,4,4,3,12,8,6,4,4,4,5,4,3,4,6,14,6,4,3,8,4,6,10,8,14,11,6,9,4,3,4,4,3,4,5,3,3,6,4,24,12,22,20,14,15,17,24,20,18,16,15,20,18,14,15,13];
const gpu = [2,8,8,8,8,8,5,2,3,9,8,7,3,2,3,3,4,3,6,17,3,3,4,3,3,8,6,5,12,17,12,7,3,2,3,4,3,3,3,3,3,4,4,3,9,4,11,3,8,12,3,3,8,14,5,12,5,5,5,5];
const ITEMS = [
  ['CPU', ['14%&ensp;3.80 GHz'], blue(low)],
  ['記憶體', ['11.1/32.0 GB (35%)'], `<path d="M0 66H59V100H0z" fill="#f3eff5"/><path d="M0 100V66H59" ${line} stroke="#a040c0" stroke-width="1.500"/>`],
  ['磁碟 0 (Z: C:)', ['SSD', '1%'], ''],
  ['磁碟 1 (F:)', ['SSD', '0%'], ''],
  ['磁碟 2 (I:)', ['SSD', '0%'], ''],
  ['乙太網路', ['乙太網路執行個體 0', '已傳送: 16.0 已接收: 32.0 Kbps'], `<path d="M0 9H59" ${line} stroke="#d9b491" stroke-width="1.500"/><polygon points="0,100 ${pts(spikes)} 59,100" fill="#c96424" fill-opacity=".35"/><polyline points="${pts(spikes)}" ${line} stroke="#c96424" stroke-width="1.500"/>`],
  ['Wi-Fi Direct', ['區域連線* 12', '已傳送: 0 已接收: 0 Kbps'], ''],
  ['乙太網路', ['ZeroTier One [93afae5963f7c837]', '已傳送: 0 已接收: 0 Kbps'], ''],
  ['乙太網路', ['ZeroTier One [8056c2e21c75aae7]', '已傳送: 0 已接收: 0 Kbps'], ''],
  ['GPU 0', ['AMD Radeon RX 6900 XT', '7%&ensp;(48 °C)'], blue(gpu)],
  ['GPU 1', ['NVIDIA GeForce RTX 3050', '0%&ensp;(36 °C)'], '']];
document.getElementById('tm-list').innerHTML = ITEMS.map(([t, sub, art], i) =>
  `<button class="d-flex align-items-start ${sub.length < 2 ? 'tm-short' : ''} ${i ? '' : 'active'}"><svg class="tm-thumb" viewBox="0 0 59 100" preserveAspectRatio="none">${art}</svg><span><b>${t}</b>${sub.join('<br>')}</span></button>`).join('');
</script>
</body>
</html>
